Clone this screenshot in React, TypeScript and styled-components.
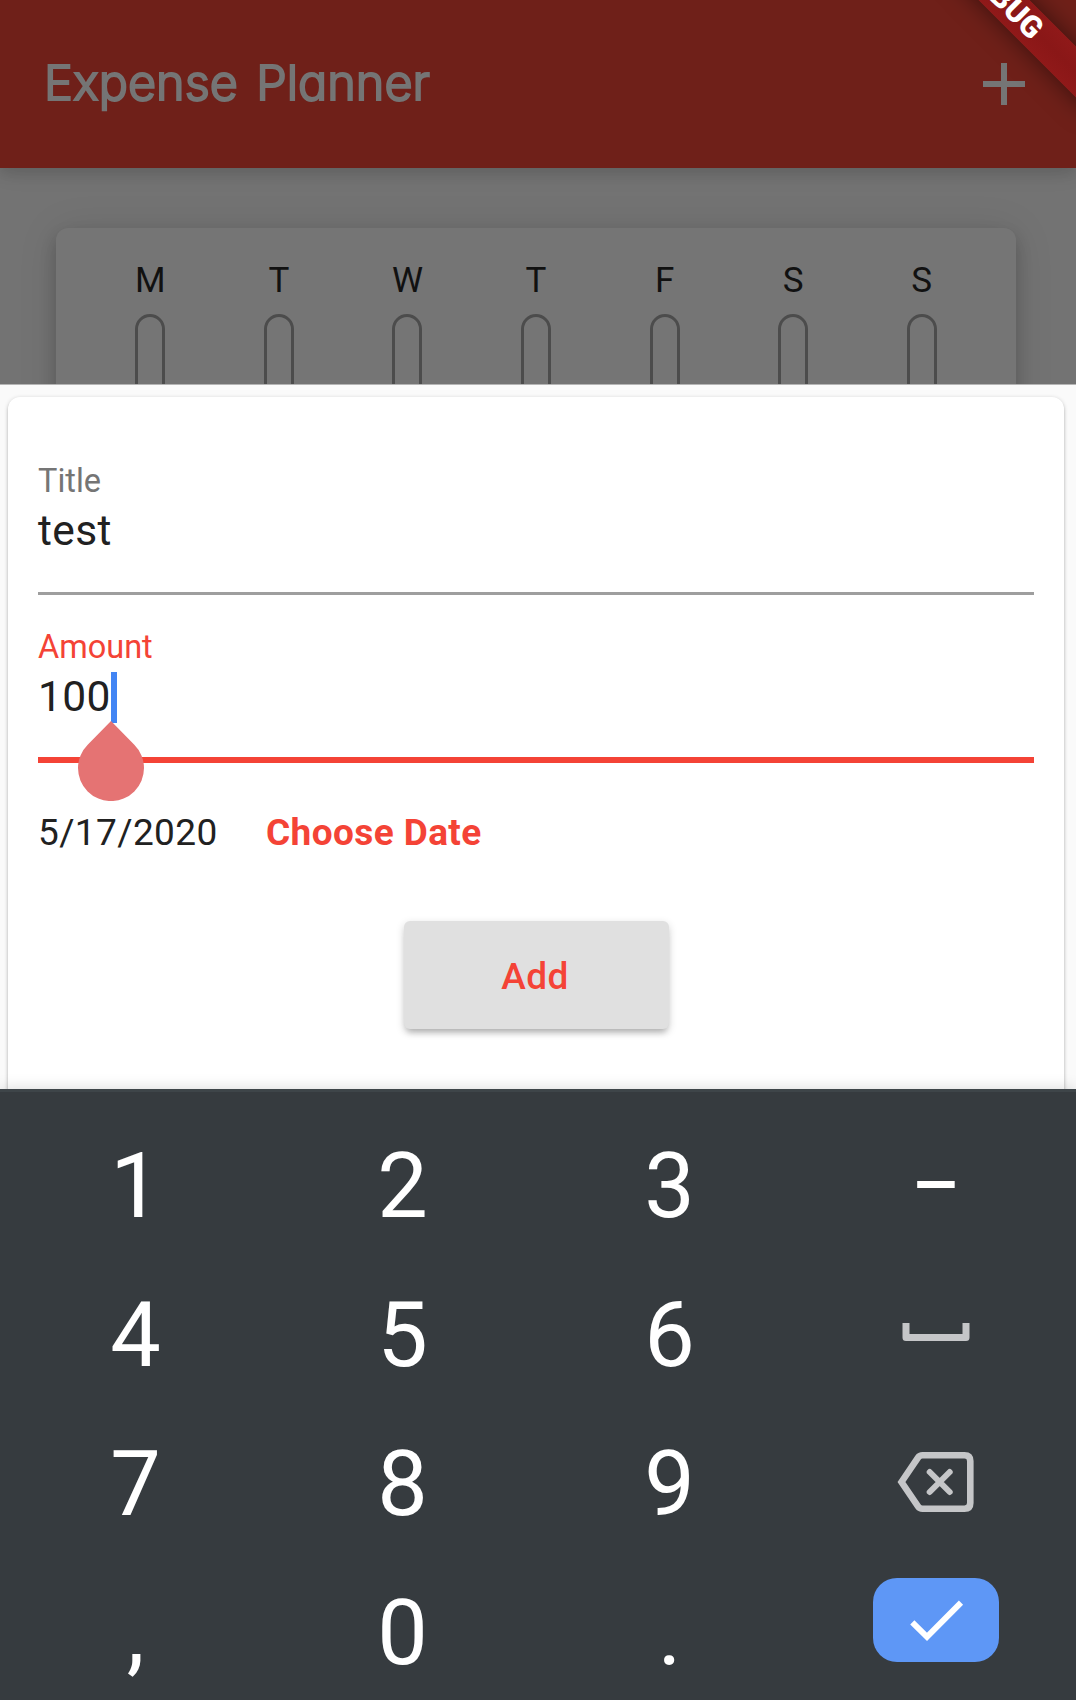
import React from "react";
import styled, { createGlobalStyle } from "styled-components";

const GlobalStyle = createGlobalStyle`
  html, body { margin: 0; padding: 0; overflow: hidden; }
  *, *::before, *::after { box-sizing: border-box; }
  button { font: inherit; border: 0; padding: 0; margin: 0; background: none; }
`;

const Screen = styled.div`
  position: relative;
  width: 1076px;
  height: 1700px;
  overflow: hidden;
  display: flex;
  flex-direction: column;
  background: #737373;
  font-family: Roboto, "Liberation Sans", sans-serif;
`;

const AppBar = styled.header`
  flex: none;
  height: 168px;
  padding: 0 51px 0 44px;
  display: flex;
  align-items: center;
  justify-content: space-between;
  background: #6f2019;
  box-shadow: 0 6px 12px rgba(0, 0, 0, 0.1), 0 3px 24px rgba(0, 0, 0, 0.08);
  z-index: 1;
`;

const AppTitle = styled.h1`
  margin: 0 0 2px;
  font-family: Inter, Lato, sans-serif;
  font-weight: 300;
  font-size: 48.5px;
  line-height: 60px;
  letter-spacing: 0.05px;
  word-spacing: 4.5px;
  font-feature-settings: "cv11" 1;
  -webkit-text-stroke: 2.1px #757575;
  stroke-linejoin: round;
  color: #757575;
`;

const AddIcon = styled.svg`
  display: block;
  width: 42px;
  height: 42px;
`;

const DebugBanner = styled.div`
  position: absolute;
  z-index: 3;
  left: 864px;
  top: -18px;
  width: 280px;
  height: 36px;
  display: flex;
  align-items: center;
  justify-content: center;
  padding-right: 2px;
  transform: rotate(45deg);
  background: linear-gradient(#901919, #8a1717 50%, #901919);
  box-shadow: 0 0 24px rgba(0, 0, 0, 0.5);
  color: #fff;
  font-size: 30.6px;
  line-height: 36px;
  font-weight: 900;
`;

const Backdrop = styled.main`
  flex: none;
  height: 216px;
  padding: 60px 60px 0 56px;
  overflow: hidden;
`;

const ChartCard = styled.section`
  height: 300px;
  padding: 32px 30px 0;
  display: grid;
  grid-template-columns: repeat(7, 1fr);
  border-radius: 12px;
  background: #757575;
  box-shadow: 0 8px 16px rgba(0, 0, 0, 0.18), 0 3px 40px rgba(0, 0, 0, 0.1);
`;

const Day = styled.div`
  display: flex;
  flex-direction: column;
  align-items: center;
  gap: 13px;
  font-size: 35px;
  line-height: 41px;
  color: #111;
`;

const Bar = styled.div`
  width: 30px;
  height: 180px;
  border: 3px solid #4c4c4c;
  border-radius: 15px;
`;

const Sheet = styled.section`
  flex: none;
  height: 705px;
  padding: 12px 12px 0 8px;
  overflow: hidden;
  background: #fafafa;
  border-top: 1px solid #b5b5b5;
`;

const FormCard = styled.form`
  height: 760px;
  padding: 64px 30px 0;
  display: flex;
  flex-direction: column;
  background: #fff;
  border-radius: 12px;
  box-shadow: 0 3px 3px rgba(0, 0, 0, 0.14), 0 1px 4px rgba(0, 0, 0, 0.2);
`;

const Field = styled.div<{ $active?: boolean }>`
  height: ${(p) => (p.$active ? 167 : 135)}px;
  margin-bottom: ${(p) => (p.$active ? 0 : 31)}px;
`;

const Label = styled.label<{ $active?: boolean }>`
  display: block;
  height: 40px;
  font-size: 32.5px;
  line-height: 40px;
  color: ${(p) => (p.$active ? "#f44336" : "#757575")};
`;

const Entry = styled.div`
  display: flex;
  align-items: center;
  height: 60px;
  font-size: 42.5px;
  line-height: 60px;
  letter-spacing: 0.4px;
  color: #212121;
`;

const Caret = styled.span`
  position: relative;
  width: 6px;
  height: 51px;
  background: #4285f4;
`;

const Handle = styled.svg`
  position: absolute;
  z-index: 1;
  left: -33px;
  top: 49px;
  width: 66px;
  height: 80px;
`;

const Underline = styled.div<{ $active?: boolean }>`
  height: ${(p) => (p.$active ? 6 : 3)}px;
  margin-top: ${(p) => (p.$active ? 29.5 : 31)}px;
  background: ${(p) => (p.$active ? "#f44336" : "#9e9e9e")};
`;

const DateRow = styled.div`
  display: flex;
  align-items: center;
  height: 60px;
  margin-top: 8px;
  font-size: 37px;
  letter-spacing: 0.4px;
  color: #212121;
`;

const DateText = styled.span`
  width: 228px;
`;

const ChooseDate = styled.button`
  font-weight: 700;
  letter-spacing: 0.4px;
  color: #f44336;
`;

const AddButton = styled.button`
  align-self: center;
  width: 265px;
  height: 108px;
  margin-top: 59px;
  padding: 2px 2px 0 0;
  border-radius: 6px;
  background: #e0e0e0;
  box-shadow: 0 6px 6px -3px rgba(0, 0, 0, 0.2), 0 3px 9px rgba(0, 0, 0, 0.18);
  font-size: 37px;
  font-weight: 500;
  letter-spacing: 0.4px;
  color: #f44336;
`;

const Keyboard = styled.section`
  flex: none;
  height: 611px;
  padding: 18px 0 0 2px;
  display: grid;
  grid-template-columns: 267px 267px 267px 265px;
  grid-auto-rows: 149px;
  border-top: 3px solid #3e4549;
  background: #363b3f;
  box-shadow: 0 0 15px rgba(0, 0, 0, 0.16);
  overflow: hidden;
`;

const Key = styled.button<{ $icon?: boolean; $dash?: boolean }>`
  display: flex;
  align-items: center;
  justify-content: center;
  height: 149px;
  padding-top: ${(p) => (p.$icon || p.$dash ? 0 : 5)}px;
  padding-bottom: ${(p) => (p.$icon ? 2 : 0)}px;
  font-size: ${(p) => (p.$dash ? 75 : 90)}px;
  font-weight: ${(p) => (p.$dash ? 500 : 400)};
  line-height: 144px;
  color: #fff;
`;

const EnterKey = styled.button`
  display: flex;
  justify-content: center;
  align-self: start;
  justify-self: center;
  width: 126px;
  height: 84px;
  margin-top: 21px;
  border-radius: 24px;
  background: #5e97f6;
`;

const KeyIcon = styled.svg`
  display: block;
  fill: none;
  stroke: #c5c6c8;
`;

const days = ["M", "T", "W", "T", "F", "S", "S"];

export default function App() {
  return (
    <Screen>
      <GlobalStyle />
      <AppBar>
        <AppTitle>Expense Planner</AppTitle>
        <AddIcon viewBox="0 0 42 42">
          <path d="M21 0v42M0 21h42" stroke="#757575" strokeWidth="6" />
        </AddIcon>
      </AppBar>
      <DebugBanner>DEBUG</DebugBanner>
      <Backdrop>
        <ChartCard>
          {days.map((d, i) => (
            <Day key={i}>
              {d}
              <Bar />
            </Day>
          ))}
        </ChartCard>
      </Backdrop>
      <Sheet>
        <FormCard>
          <Field>
            <Label>Title</Label>
            <Entry>test</Entry>
            <Underline />
          </Field>
          <Field $active>
            <Label $active>Amount</Label>
            <Entry>
              100
              <Caret>
                <Handle viewBox="0 0 66 80">
                  <path
                    d="M33 0L56.3 23.7A33 33 0 1 1 9.7 23.7Z"
                    fill="#e57373"
                  />
                </Handle>
              </Caret>
            </Entry>
            <Underline $active />
          </Field>
          <DateRow>
            <DateText>5/17/2020</DateText>
            <ChooseDate type="button">Choose Date</ChooseDate>
          </DateRow>
          <AddButton type="button">Add</AddButton>
        </FormCard>
      </Sheet>
      <Keyboard>
        <Key>1</Key>
        <Key>2</Key>
        <Key>3</Key>
        <Key $dash>–</Key>
        <Key>4</Key>
        <Key>5</Key>
        <Key>6</Key>
        <Key $icon>
          <KeyIcon width="68" height="22" viewBox="0 0 68 22">
            <path d="M4 1v14.5h60V1" strokeWidth="7" strokeLinejoin="round" />
          </KeyIcon>
        </Key>
        <Key>7</Key>
        <Key>8</Key>
        <Key>9</Key>
        <Key $icon>
          <KeyIcon width="78" height="60" viewBox="0 0 78 60">
            <path
              d="M4.5 30L21 5.6Q22.6 3.3 25.5 3.3H67.5Q73.3 3.3 73.3 9V51Q73.3 56.7 67.5 56.7H25.5Q22.6 56.7 21 54.4Z"
              strokeWidth="6.6"
            />
            <path d="M32.7 20L52.7 40M52.7 20L32.7 40" strokeWidth="6" strokeLinecap="round" />
          </KeyIcon>
        </Key>
        <Key>,</Key>
        <Key>0</Key>
        <Key>.</Key>
        <EnterKey>
          <KeyIcon width="126" height="84" viewBox="0 0 126 84">
            <path d="M39.3 44.3L54 58.8L88 24.7" stroke="#fff" strokeWidth="5.9" />
          </KeyIcon>
        </EnterKey>
      </Keyboard>
    </Screen>
  );
}
